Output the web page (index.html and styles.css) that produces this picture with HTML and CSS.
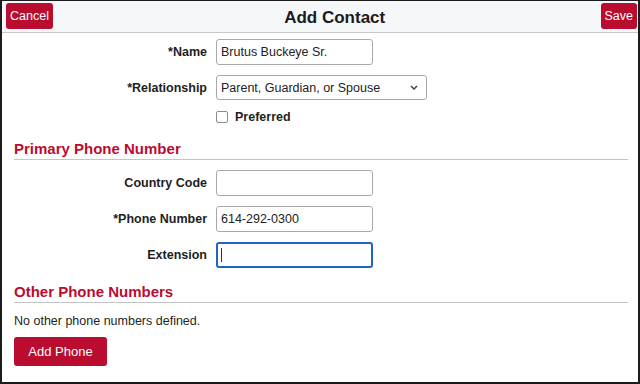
FILE: index.html
```html
<!doctype html>
<html>
<head>
    <title>Add Contact</title>
    <meta charset="utf-8"/>
    <link rel="stylesheet" href="styles.css">
</head>
<body>
<div class="page">
    <div class="topbar">
        <button class="btn btn-small">Cancel</button>
        <h1>Add Contact</h1>
        <button class="btn btn-small">Save</button>
    </div>

    <div class="content">
        <div class="form">
            <label class="label" for="name">*Name</label>
            <input class="field" id="name" type="text" value="Brutus Buckeye Sr.">

            <label class="label" for="rel">*Relationship</label>
            <div class="selectWrap">
                <select class="field selectField" id="rel">
                    <option>Parent, Guardian, or Spouse</option>
                </select>
                <svg class="chevron" width="8" height="5" viewBox="0 0 8 5">
                    <path d="M1 1 L4 4 L7 1" fill="none" stroke="#444" stroke-width="1.5"/>
                </svg>
            </div>

            <span></span>
            <label class="check"><span class="box"></span>Preferred</label>
        </div>

        <h2 class="section first">Primary Phone Number</h2>
        <div class="form">
            <label class="label" for="cc">Country Code</label>
            <input class="field" id="cc" type="text" value="">

            <label class="label" for="ph">*Phone Number</label>
            <input class="field" id="ph" type="text" value="614-292-0300">

            <label class="label" for="ext">Extension</label>
            <div class="field focused"><span class="caret"></span></div>
        </div>

        <h2 class="section">Other Phone Numbers</h2>
        <p class="empty">No other phone numbers defined.</p>
        <button class="btn btn-add">Add Phone</button>
    </div>
</div>
</body>
</html>
```

FILE: styles.css
```css
* {
    margin: 0;
    box-sizing: border-box;
    font-family: "Liberation Sans", Arial, Helvetica, sans-serif;
}

body {
    margin: 0;
    background: #fff;
}

.page {
    width: 640px;
    height: 384px;
    border: 2px solid #1c1c1c;
    border-top-width: 1px;
    color: #1e1f21;
    overflow: hidden;
}

.topbar {
    height: 32px;
    background-color: #f5f7f8;
    border-bottom: 1px solid #c8c8c8;
    display: flex;
    align-items: flex-start;
    justify-content: space-between;
    padding: 2px 1px 0 2px;
}

.topbar h1 {
    font-size: 17px;
    font-weight: 700;
    line-height: 30px;
    color: #1b1b1b;
    margin-left: 16px;
}

.btn {
    background-color: #ba0c2f;
    color: #fff;
    border: none;
    border-radius: 3px;
    font-size: 13px;
    cursor: pointer;
}

.btn-small {
    height: 26px;
    padding: 0 4px;
    font-size: 12.5px;
}

.btn-small:first-child {
    margin-left: 2px;
}

.content {
    padding: 6px 10px 0 12px;
}

.form {
    display: grid;
    grid-template-columns: 193px auto;
    column-gap: 9px;
    row-gap: 10px;
    align-items: center;
}

.label {
    text-align: right;
    font-weight: 700;
    font-size: 12.5px;
    color: #1e1e1e;
}

.field {
    width: 157px;
    height: 26px;
    border: 1px solid #a9a9a9;
    border-radius: 3px;
    padding: 0 4px;
    font-size: 12.5px;
    color: #222;
    background: #fff;
}

.selectWrap {
    position: relative;
    width: 211px;
}

.selectField {
    width: 211px;
    height: 25px;
    appearance: none;
    -webkit-appearance: none;
}

.chevron {
    position: absolute;
    right: 9px;
    top: 10px;
}

.check {
    display: flex;
    align-items: center;
    gap: 7px;
    font-weight: 700;
    font-size: 12.5px;
    height: 13px;
}

.box {
    width: 12px;
    height: 12px;
    border: 1px solid #8a8a8a;
    border-radius: 2px;
}

.focused {
    border: 2px solid #2064c8;
    display: flex;
    align-items: center;
    padding-left: 3px;
}

.caret {
    width: 1px;
    height: 14px;
    background: #333;
}

.section {
    color: #ba0c2f;
    font-size: 15px;
    font-weight: 700;
    line-height: 18px;
    padding-bottom: 1px;
    border-bottom: 1px solid #c4c4c4;
    margin: 15px 0 10px 0;
}

.section.first {
    margin-top: 17px;
}

.empty {
    font-size: 12.5px;
    line-height: 16px;
}

.btn-add {
    margin-top: 8px;
    width: 93px;
    height: 29px;
}
```
